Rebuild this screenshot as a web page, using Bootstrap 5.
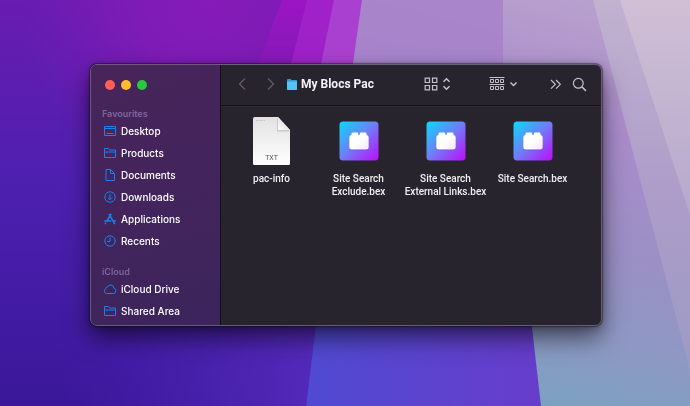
<!DOCTYPE html>
<html lang="en">
<head>
<meta charset="utf-8">
<meta name="viewport" content="width=device-width, initial-scale=1">
<title>My Blocs Pac</title>
<link href="https://cdn.jsdelivr.net/npm/bootstrap@5.3.0/dist/css/bootstrap.min.css" rel="stylesheet">
<style>
body{font-family:Inter,"Liberation Sans",sans-serif;background:#4a1fae;color:#fff}
.wallpaper{z-index:-1}
.desk{padding:64px 88px 80px 90px}
.finder{min-height:262px;border:1px solid #6d5a7c;border-radius:7px;background:#28242e;box-shadow:0 0 1px 1px rgba(0,0,0,.4),0 12px 24px rgba(0,0,0,.55),0 2px 10px rgba(0,0,0,.25)}
.side{width:130px;flex:none;background:linear-gradient(160deg,#472559,#43245c 50%,#3b255c);border-right:1px solid #120d18;padding-bottom:3px}
.lights{height:42px;padding:15px 0 0 14px;gap:6px}
.light{width:10px;height:10px;border:0;border-radius:50%;padding:0}
.light-close{background:#ff5f57}.light-min{background:#febc2e}.light-max{background:#28c840}
.side-title{font-size:9px;line-height:13px;font-weight:600;color:#7f659a;margin:0;padding-left:11px}
.place{height:22px;font-size:10px;font-weight:500;line-height:22px;color:#fff;text-decoration:none;padding-left:12px;gap:4px}
.place svg{width:14px;height:14px;flex:none;fill:none;stroke:#1a80ee;stroke-width:1}
.side-group+.side-group{margin-top:13px}
.tools{height:41px;border-bottom:1px solid #110e15;box-shadow:0 1px 0 #302c37;padding:0 14px 2px 16px}
.tool{background:none;border:0;padding:0;line-height:0;color:#c6c2cb}
.tool svg{fill:none;stroke:currentColor;stroke-width:1.2;display:block}
.tool.dim{color:#625d69}
.tool-group{margin:0 30px 0 38px}
.heading-text{font-family:Roboto,"Liberation Sans",sans-serif;font-size:12px;font-weight:700;line-height:16px;margin:0;color:#f4f2f6}
.files{padding:10px 7px;display:grid;grid-template-columns:repeat(auto-fill,87px)}
.file{background:none;border:0;padding:0;color:#f0eef2;font-family:Roboto,"Liberation Sans",sans-serif;font-size:10px;font-weight:500;line-height:13px}
.file-art{height:50px;margin-bottom:6px}
</style>
<script src="https://cdn.jsdelivr.net/npm/bootstrap@5.3.0/dist/js/bootstrap.bundle.min.js"></script>
</head>
<body>
<svg class="wallpaper position-fixed top-0 start-0 w-100 h-100" viewBox="0 0 690 406" preserveAspectRatio="none" aria-hidden="true">
<defs>
<linearGradient id="wl" x1="0" y1="0" x2="0" y2="1"><stop offset="0" stop-color="#681cb0"/><stop offset=".45" stop-color="#4d20b0"/><stop offset="1" stop-color="#3a1799"/></linearGradient>
<radialGradient id="wm" gradientUnits="userSpaceOnUse" cx="210" cy="0" r="190"><stop offset="0" stop-color="#861bb8"/><stop offset=".4" stop-color="#801bb6" stop-opacity=".9"/><stop offset="1" stop-color="#7a1bb6" stop-opacity="0"/></radialGradient>
<linearGradient id="wb" x1="0" y1="0" x2="1" y2="0"><stop offset="0" stop-color="#4a24b4" stop-opacity="0"/><stop offset="1" stop-color="#552abb"/></linearGradient>
<linearGradient id="wmag" x1="0" y1="0" x2="0" y2="1"><stop offset="0" stop-color="#9b15c3"/><stop offset="1" stop-color="#8619b8"/></linearGradient>
<linearGradient id="wblue" x1="0" y1="0" x2="1" y2="0"><stop offset="0" stop-color="#504ad2"/><stop offset="1" stop-color="#673dcb"/></linearGradient>
<linearGradient id="wr" gradientUnits="userSpaceOnUse" x1="650" y1="20" x2="550" y2="406"><stop offset="0" stop-color="#b8a0cd"/><stop offset=".3" stop-color="#a98ccb"/><stop offset=".6" stop-color="#9a90c4"/><stop offset=".8" stop-color="#8f98c4"/><stop offset="1" stop-color="#7ba1c0"/></linearGradient>
<linearGradient id="wr2" x1="0" y1="0" x2="0" y2="1"><stop offset="0" stop-color="#c2b2d0"/><stop offset=".5" stop-color="#ae9dc9"/><stop offset="1" stop-color="#9b9bc4"/></linearGradient>
<linearGradient id="wr3" x1="0" y1="0" x2="0" y2="1"><stop offset="0" stop-color="#d0bfd5"/><stop offset="1" stop-color="#b5a9cc"/></linearGradient>
</defs>
<path fill="url(#wl)" d="M0 0H690V406H0z"/>
<path fill="url(#wm)" d="M0 0H362V190H0z"/>
<path fill="url(#wb)" d="M60 270H325L306 406H60z"/>
<path fill="url(#wmag)" d="M282 0H362L353 64H258z"/>
<path fill="#a324ca" fill-opacity=".8" d="M307 0H362L353 64H291z"/>
<path fill="#ac48d2" fill-opacity=".8" d="M334 0H362L353 64H321z"/>
<path fill="url(#wr)" d="M362 0H690V406H530L500 64H353z"/>
<path fill="#a67fcb" fill-opacity=".75" d="M362 0H503V64H353z"/>
<path fill="url(#wr2)" d="M593 0H690V370z"/>
<path fill="url(#wr3)" d="M620 0H690V215z"/>
<path fill="url(#wblue)" d="M318 310H530L541 406H306z"/>
</svg>
<main class="desk">
<div class="finder d-flex overflow-hidden">
<nav class="side" aria-label="Places">
<div class="lights d-flex">
<button class="light light-close" aria-label="Close"></button>
<button class="light light-min" aria-label="Minimise"></button>
<button class="light light-max" aria-label="Zoom"></button>
</div>
<div class="side-group">
<h2 class="side-title">Favourites</h2>
<a class="place d-flex align-items-center" href="#"><svg viewBox="0 0 14 14"><path d="M1.500 2.500h11v9h-11zM1.500 4.500h11M3.500 9.500h7"/></svg>Desktop</a>
<a class="place d-flex align-items-center" href="#"><svg viewBox="0 0 14 14"><path d="M1.500 11.500v-9h4l1 1.500h6v7.500zM1.500 6h11"/></svg>Products</a>
<a class="place d-flex align-items-center" href="#"><svg viewBox="0 0 14 14"><path d="M3 1.500h4.500l4 4v7H3zM7.500 1.500v4h4"/></svg>Documents</a>
<a class="place d-flex align-items-center" href="#"><svg viewBox="0 0 14 14"><circle cx="7" cy="7" r="5.200"/><path d="M7 4v5.500M4.800 7.500 7 9.700l2.200-2.200"/></svg>Downloads</a>
<a class="place d-flex align-items-center" href="#"><svg viewBox="0 0 14 14"><path stroke-width="1.500" d="M6 1.800 7.200 4M8.200 1.800 3.900 9M7.200 4.200l4.600 8M1.300 9h7M10 9h2.700M3 10.600l-.9 1.500"/></svg>Applications</a>
<a class="place d-flex align-items-center" href="#"><svg viewBox="0 0 14 14"><circle cx="7" cy="7" r="5.200"/><path d="M7 3.500V7.500H4.300"/></svg>Recents</a>
</div>
<div class="side-group">
<h2 class="side-title">iCloud</h2>
<a class="place d-flex align-items-center" href="#"><svg viewBox="0 0 14 14"><path d="M3.500 11.500a2.500 2.500 0 0 1-.6-4.800 1.700 1.700 0 0 1 1.700-1.800 3.300 3.300 0 0 1 6.300 1.300 2.700 2.700 0 0 1-.4 5.300z"/></svg>iCloud Drive</a>
<a class="place d-flex align-items-center" href="#"><svg viewBox="0 0 14 14"><path d="M1.500 11.500v-9h4l1 1.500h6v7.500zM1.500 6h11"/></svg>Shared Area</a>
</div>
</nav>
<section class="flex-grow-1">
<header class="tools d-flex align-items-center">
<button class="tool dim" aria-label="Back"><svg width="10" height="14" viewBox="0 0 10 14"><path d="M8 1.500 2.500 7 8 12.500"/></svg></button>
<button class="tool dim ms-3" aria-label="Forward"><svg width="16" height="14" viewBox="0 0 16 14"><path d="M5 1.500 10.500 7 5 12.500"/></svg></button>
<svg class="ms-2 me-1" width="10" height="11" viewBox="0 0 10 11" aria-hidden="true"><path fill="#3398d0" d="M0 1q0-1 1-1h2.500l1 1H9q1 0 1 1v8q0 1-1 1H1q-1 0-1-1z"/><path fill="#56c3f2" d="M0 2.500h10V10q0 1-1 1H1q-1 0-1-1z"/></svg>
<h1 class="heading-text">My Blocs Pac</h1>
<button class="tool d-flex align-items-center gap-1 ms-auto" aria-label="Icon view"><svg width="14" height="14" viewBox="0 0 14 14"><path d="M1.200 1.200h4.300v4.300H1.200zM8.500 1.200h4.300v4.300H8.500zM1.200 8.500h4.300v4.300H1.200zM8.500 8.500h4.300v4.300H8.500z"/></svg><svg width="9" height="14" viewBox="0 0 9 14"><path stroke-width="1.500" d="M1.500 4.800l3-3 3 3M1.500 9.200l3 3 3-3"/></svg></button>
<button class="tool tool-group d-flex align-items-center gap-1" aria-label="Group by"><svg width="16" height="14" viewBox="0 0 16 14"><path stroke-width="1" d="M.5.500h15M.5 7.500h15M1.500 2.500h3v3h-3zM6.500 2.500h3v3h-3zM11.500 2.500h3v3h-3zM1.500 9.500h3v3h-3zM6.500 9.500h3v3h-3zM11.500 9.500h3v3h-3z"/></svg><svg width="9" height="14" viewBox="0 0 9 14"><path stroke-width="1.500" d="M1.500 5.500l3 3 3-3"/></svg></button>
<button class="tool me-2" aria-label="More tools"><svg width="16" height="14" viewBox="0 0 16 14"><path d="M3 3l4.300 4.300L3 11.600M8 3l4.300 4.300L8 11.600"/></svg></button>
<button class="tool" aria-label="Search"><svg width="15" height="15" viewBox="0 0 15 15"><circle cx="6.300" cy="6.300" r="4.900"/><path stroke-width="1.500" d="M9.800 9.800l4.100 4.100"/></svg></button>
</header>
<div class="files">
<button class="file d-flex flex-column align-items-center"><span class="file-art d-flex align-items-center"><svg width="38" height="48" viewBox="0 0 38 48" aria-hidden="true"><defs><linearGradient id="pg" x1="0" y1="0" x2="0" y2="1"><stop offset="0" stop-color="#e2e2e2"/><stop offset="1" stop-color="#fff"/></linearGradient><linearGradient id="pf" x1="0" y1="1" x2="1" y2="0"><stop offset="0" stop-color="#fff"/><stop offset="1" stop-color="#ccc"/></linearGradient></defs><path fill="url(#pg)" d="M1.500 0H25L37 13v33.500q0 1.500-1.500 1.500h-34Q0 48 0 46.500v-45Q0 0 1.500 0z"/><path fill="#b5b5b5" d="M24 1v13.500h13z" opacity=".6"/><path fill="url(#pf)" d="M25 0v11.500q0 1.500 1.500 1.500H37z"/><path stroke="#bbb" stroke-width=".7" stroke-dasharray="2 .6" d="M3 3.500h9"/><text x="18.500" y="43" text-anchor="middle" font-size="7" font-weight="400" fill="#555">TXT</text></svg></span>pac-info</button>
<button class="file d-flex flex-column align-items-center"><span class="file-art d-flex align-items-center"><svg width="40" height="40" viewBox="0 0 40 40" aria-hidden="true"><defs><linearGradient id="bx" x1="0" y1="0" x2="1" y2="1"><stop offset="0" stop-color="#08dcf8"/><stop offset=".5" stop-color="#727af8"/><stop offset="1" stop-color="#bd0cfa"/></linearGradient><linearGradient id="br" x1="0" y1="0" x2="1" y2="1"><stop offset=".5" stop-color="#fff"/><stop offset="1" stop-color="#f3e6fd"/></linearGradient><g id="bex"><rect x=".5" y=".5" width="39" height="39" rx="3.500" fill="url(#bx)"/><path fill="#4a28a8" opacity=".35" d="M10.200 16h19.600v10.500q0 2.800-2.500 2.800H12.700q-2.500 0-2.500-2.800z"/><path fill="url(#br)" d="M12.500 14v-1.200q0-1.300 1.300-1.300h4.200q1.300 0 1.300 1.300V14h1.400v-1.200q0-1.300 1.300-1.300h4.200q1.300 0 1.300 1.300V14q2.200.2 2.200 2.300v9.700q0 2.500-2.500 2.500H12.800q-2.500 0-2.500-2.500v-9.700q0-2.100 2.200-2.300z"/></g></defs><use href="#bex"/></svg></span>Site Search<br>Exclude.bex</button>
<button class="file d-flex flex-column align-items-center"><span class="file-art d-flex align-items-center"><svg width="40" height="40" viewBox="0 0 40 40" aria-hidden="true"><use href="#bex"/></svg></span><span>Site Search<br>External Links.bex</span></button>
<button class="file d-flex flex-column align-items-center"><span class="file-art d-flex align-items-center"><svg width="40" height="40" viewBox="0 0 40 40" aria-hidden="true"><use href="#bex"/></svg></span>Site Search.bex</button>
</div>
</section>
</div>
</main>
</body>
</html>
